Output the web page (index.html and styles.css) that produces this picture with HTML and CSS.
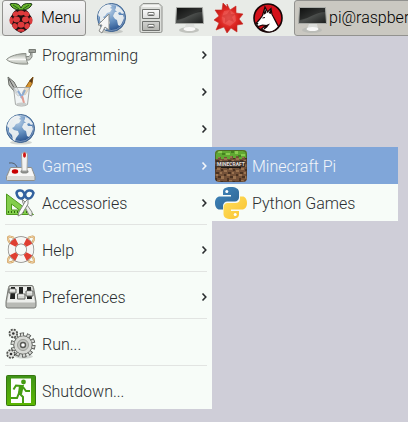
FILE: index.html
```html
<!DOCTYPE html>
<html lang="en">
<head>
<meta charset="utf-8">
<title>Desktop</title>
<link rel="stylesheet" href="styles.css">
</head>
<body>
<svg class="defs" width="0" height="0" aria-hidden="true">
  <defs>
    <radialGradient id="sea" cx=".4" cy=".25" r=".8"><stop offset="0" stop-color="#b5cce4"/><stop offset=".5" stop-color="#6590c0"/><stop offset="1" stop-color="#204a87"/></radialGradient>
    <linearGradient id="metal" x1="0" y1="0" x2="0" y2="1"><stop offset="0" stop-color="#fafafa"/><stop offset="1" stop-color="#b4b5b0"/></linearGradient>
    <linearGradient id="screen" x1="0" y1="0" x2="1" y2="1"><stop offset="0" stop-color="#181a19"/><stop offset=".5" stop-color="#4d504e"/><stop offset="1" stop-color="#1b1d1c"/></linearGradient>
    <linearGradient id="steel" x1="0" y1="0" x2="0" y2="1"><stop offset="0" stop-color="#a5aaa2"/><stop offset=".5" stop-color="#eef0ec"/><stop offset="1" stop-color="#b5bab2"/></linearGradient>
    <linearGradient id="exit" x1="0" y1="0" x2="0" y2="1"><stop offset="0" stop-color="#3f9318"/><stop offset="1" stop-color="#5cb800"/></linearGradient>
    <linearGradient id="pyblue" x1="0" y1="0" x2="1" y2="1"><stop offset="0" stop-color="#3f87bf"/><stop offset="1" stop-color="#2f6491"/></linearGradient>
    <linearGradient id="pyyellow" x1="0" y1="0" x2="1" y2="1"><stop offset="0" stop-color="#ffe15f"/><stop offset="1" stop-color="#f9c02f"/></linearGradient>
    <radialGradient id="burst"><stop offset="0" stop-color="#f26a66"/><stop offset=".6" stop-color="#dd2823"/><stop offset="1" stop-color="#c21713"/></radialGradient>
    <symbol id="globe" viewBox="0 0 32 32">
      <ellipse cx="16" cy="29.500" rx="11" ry="2" fill="#000" opacity=".15"/>
      <circle cx="15.500" cy="15.500" r="14" fill="url(#sea)" stroke="#3c6390"/>
      <path d="M3 10C5 5 9 2.500 13 2.500l3 1.500-2 2 2 1-2 3-3 1-2 3-2 1 2 2 4 1 1 3-3 4-1 3-2-1-1-5-3-3 0-4-2-2zM20 4c4 1 6 4 8 7l-2 1-2-2-2 1 1 2 4 0 1 3-2 5-2 3-2-1-1-5-2-1-2-3 2-4 2 0-2-2 1-2z" fill="#f3f5f4" opacity=".9"/>
      <circle cx="15.500" cy="15.500" r="13" fill="none" stroke="#fff" opacity=".35"/>
    </symbol>
    <symbol id="monitor" viewBox="0 0 32 32">
      <ellipse cx="15" cy="28" rx="10" ry="3" fill="#b7b9b4" opacity=".8"/>
      <path d="M12 22h8l1 5H10z" fill="#dcdedb"/>
      <ellipse cx="15.500" cy="27" rx="6" ry="2" fill="#f8f8f7"/>
      <path d="M2.500 5.500h26l1 16h-28z" fill="url(#screen)" stroke="#a9aba7"/>
      <path d="M3 6h25v4C19 10 14 16 3 18z" fill="#000" opacity=".4"/>
    </symbol>
    <symbol id="chevron" viewBox="0 0 8 10"><path d="M2.500 1.500 5.800 5 2.500 8.500" fill="none" stroke="currentColor" stroke-width="1.600"/></symbol>
  </defs>
</svg>

<header class="taskbar">
  <button class="menu-button" type="button" aria-expanded="true">
    <svg class="berry" viewBox="0 0 26 30" aria-hidden="true">
      <path d="M13 6C9 5 5 9 4 12c-3 3-3 7 0 10 1 4 5 6 9 8 4-2 8-4 9-8 3-3 3-7 0-10-1-3-5-7-9-6z" fill="#1d0e10"/>
      <path d="M13 7C9 7 4 6 2 1c3-1 5-1 7 0 2 0 3 2 4 4 1-2 2-4 4-4 2-1 4-1 7 0-2 5-7 6-11 6z" fill="#69b52c" stroke="#173312"/>
      <path d="M5 2l6 4M21 2l-6 4" stroke="#23601a"/>
      <g fill="#dd3a3c"><ellipse cx="13" cy="10" rx="3.500" ry="2.500"/><ellipse cx="7.500" cy="11" rx="3" ry="2.500" transform="rotate(-35 7.500 11)"/><ellipse cx="18.500" cy="11" rx="3" ry="2.500" transform="rotate(35 18.500 11)"/><ellipse cx="8.500" cy="16.500" rx="3.500" ry="3"/><ellipse cx="17.500" cy="16.500" rx="3.500" ry="3"/><ellipse cx="3.300" cy="17.500" rx="1.700" ry="3.500"/><ellipse cx="22.700" cy="17.500" rx="1.700" ry="3.500"/><ellipse cx="13" cy="21.800" rx="3.500" ry="3"/><ellipse cx="7" cy="23" rx="2.500" ry="3" transform="rotate(-35 7 23)"/><ellipse cx="19" cy="23" rx="2.500" ry="3" transform="rotate(35 19 23)"/><ellipse cx="13" cy="27.300" rx="3.500" ry="1.500"/></g>
    </svg>
    <span>Menu</span>
  </button>
  <nav class="launchers" aria-label="Launchers">
    <button type="button" aria-label="Web Browser">
      <svg viewBox="0 0 32 32" aria-hidden="true"><use href="#globe"/><path d="M12 11v16l-4-3-3 6-3-2 3-6H1z" transform="translate(1 1)" fill="#f6f6f5" stroke="#8b8d8a"/></svg>
    </button>
    <button type="button" aria-label="File Manager">
      <svg viewBox="0 0 32 32" aria-hidden="true">
        <path d="M8 1.500h16l3 3V29a1.500 1.500 0 0 1-1.500 1.500h-19A1.500 1.500 0 0 1 5 29V4.500z" fill="#dcdeda" stroke="#8e908c"/>
        <path d="M8 3h16l1 2H7z" fill="#f5f5f4"/>
        <path d="M7.500 7.500h17v9h-17zM7.500 19.500h17v9h-17z" fill="url(#metal)" stroke="#70726f"/>
        <path d="M13 10.500h6v3h-6zM13 22.500h6v3h-6z" fill="#fff" stroke="#777974"/>
        <path d="M14 13h4M14 25h4" stroke="#555"/>
      </svg>
    </button>
    <button type="button" aria-label="Terminal"><svg viewBox="0 0 32 32" aria-hidden="true"><use href="#monitor"/></svg></button>
    <button type="button" aria-label="Mathematica">
      <svg viewBox="0 0 32 32" aria-hidden="true">
        <path d="M14 2l3 6 6-4 0 7 7 1-4 5 4 5-6 1 0 7-6-4-4 5-3-6-8 3 3-7-5-3 5-4-4-6 7 0 1-7 4 4z" fill="url(#burst)" stroke="#c92b27" stroke-width=".6"/>
        <path d="M11 9l6-1 5 4 1 7-6 5-7-3-1-6z" fill="#ee5e59" opacity=".6"/>
        <path d="M14 12l3-4 1 4 5 0-4 3 2 5-5-2-4 3 0-5-4-2z" fill="#b81916" opacity=".3"/>
      </svg>
    </button>
    <button type="button" aria-label="Wolfram">
      <svg viewBox="0 0 32 32" aria-hidden="true">
        <circle cx="16" cy="16" r="14" fill="#d4111b" stroke="#170506" stroke-width="1.600"/>
        <path d="M13 5l2.500 5L19 6.500l1 6c2 3 3 6 6.500 12-2 3-5 5-9 5.500-3 0-6-1-8-3l4-3.500-3-.5-4.500 1.500L3.500 22l4-4.500 3-4z" fill="#fff" stroke="#170506" stroke-width="1.200"/>
        <path d="M13 6l-1.500 7 3-2zM19 7l-2.500 4 2.500 1zM3.500 21l3 0-1 2zM13 23.500l5-2-3 4-4 3z" fill="#170506"/>
        <path d="M10.500 16l2.500-.5" stroke="#170506"/>
      </svg>
    </button>
  </nav>
  <button class="task" type="button"><svg viewBox="0 0 32 32" aria-hidden="true"><use href="#monitor"/></svg><span>pi@raspberrypi: ~</span></button>
</header>

<nav class="menu" aria-label="Applications">
  <ul>
    <li><button class="item" type="button">
      <svg class="icon" viewBox="0 0 32 32" aria-hidden="true">
        <path d="M21 17.500h3l1.500-1.500v-5H29v2h-2v5l-2.500 3H21z" fill="#c3c6c0" stroke="#858984"/>
        <path d="M24 10.500h6.500v3H24z" fill="#9ea19b" stroke="#777b75"/>
        <path d="M1.500 20.500C5 17 13 14.500 21 14.500c-.5 3 .5 7 2 10.500-8 .5-17-.5-21.500-4.500z" fill="url(#steel)" stroke="#8b8f88"/>
        <path d="M4 20.500h17" stroke="#fff" opacity=".8"/>
      </svg><span>Programming</span><svg class="arrow" aria-hidden="true"><use href="#chevron"/></svg></button></li>
    <li><button class="item" type="button">
      <svg class="icon" viewBox="0 0 32 32" aria-hidden="true">
        <path d="M3 1l6 5 7 13-3 1L4 9z" fill="#b9bbb7" stroke="#686b66"/><path d="M4 3l8 14" stroke="#555"/>
        <path d="M28 1l-1 7-7 11-3-2 7-11z" fill="#d8962f" stroke="#94601a"/><path d="M28 1l-4 4 3 2z" fill="#5b3b18"/>
        <path d="M8.500 11.500h16l-2 17c-3 2-9 2-12 0z" fill="#eef2f4" fill-opacity=".75" stroke="#a6a9a7"/>
        <path d="M13 15l5 8M20 14l-4 8" stroke="#6f99d0" stroke-width="2" opacity=".75"/>
        <path d="M17 20l2 7" stroke="#e29a8e" stroke-width="2"/><ellipse cx="16.500" cy="28" rx="5" ry="1.500" fill="#c9ccca"/>
      </svg><span>Office</span><svg class="arrow" aria-hidden="true"><use href="#chevron"/></svg></button></li>
    <li><button class="item" type="button"><svg class="icon" viewBox="0 0 32 32" aria-hidden="true"><use href="#globe"/></svg><span>Internet</span><svg class="arrow" aria-hidden="true"><use href="#chevron"/></svg></button></li>
    <li class="parent"><button class="item selected" type="button" aria-expanded="true">
      <svg class="icon" viewBox="0 0 32 32" aria-hidden="true">
        <path d="M4 13q6-1 8 4" fill="none" stroke="#56606b"/>
        <path d="M5.500 17.500h21l3.500 9v3q0 1-1 1H2.500q-1 0-1-1v-3z" fill="#d9dad7" stroke="#8f908d"/>
        <path d="M6 18h20l3 8H3z" fill="#f6f6f5"/>
        <ellipse cx="10" cy="21.500" rx="3.200" ry="2.200" fill="#c80000"/><ellipse cx="19.500" cy="21.500" rx="4" ry="2" fill="#888a86"/>
        <path d="M16.500 4q3-4 6 0l-.5 17h-5z" fill="#f3f3f2" stroke="#a5a6a3"/><ellipse cx="19.500" cy="5" rx="1.500" ry="2.700" fill="#cf1717"/>
      </svg><span>Games</span><svg class="arrow" aria-hidden="true"><use href="#chevron"/></svg></button>
      <ul class="submenu">
        <li><button class="item selected" type="button">
          <svg class="icon" viewBox="0 0 32 32" aria-hidden="true">
            <defs>
              <clipPath id="block"><rect width="32" height="32" rx="4"/></clipPath>
              <pattern id="dirt" width="12" height="12" patternUnits="userSpaceOnUse"><path fill="#745138" d="M0 0h12v12H0z"/><path fill="#9a7350" d="M0 0h3v2H0zM6 2h3v3H6zM2 6h3v2H2zM9 8h3v2H9zM5 10h2v2H5z"/><path fill="#4a3221" d="M3 2h3v2H3zM9 0h2v2H9zM0 4h2v3H0zM6 7h2v2H6zM1 10h3v2H1z"/></pattern>
            </defs>
            <g clip-path="url(#block)"><path fill="url(#dirt)" d="M0 0h32v32H0z"/><path d="M0 0h32v8h-2V7h-3v2h-3V6h-3v2h-3V6h-3v3h-3V7H9v2H6V7H3v2H0z" fill="#60a832"/><path d="M3 1h4v2H3zM11 3h4v2h-4zM20 1h3v3h-3zM26 4h4v2h-4z" fill="#8acb51"/><path d="M7 3h3v2H7zM16 1h3v2h-3zM23 5h3v2h-3z" fill="#43801f"/>
            <path d="M1 11h30l-1 6H2z" fill="#302b28" opacity=".8"/><path d="M6 17h20v1H6z" fill="#1c1714"/></g>
            <text class="logo-text" x="16" y="16" text-anchor="middle">MINECRAFT</text>
            <rect x=".500" y=".500" width="31" height="31" rx="4" fill="none" stroke="#3b2b20" opacity=".5"/>
          </svg><span>Minecraft Pi</span></button></li>
        <li><button class="item" type="button">
          <svg class="icon" viewBox="0 0 32 32" aria-hidden="true">
            <path d="M15.800 0C9 0 8 2.500 8 5v3h8v1.500H5C2 9.500 0 12 0 16s2 6.500 4.500 6.500H8V19c0-2.500 2-4.500 4.500-4.500h7.500c2.200 0 4-1.800 4-4V5c0-3-3-5-8.200-5z" fill="url(#pyblue)"/>
            <path d="M16.200 32C23 32 24 29.500 24 27v-3h-8v-1.500h11c3 0 5-2.500 5-6.500s-2-6.500-4.500-6.500H25V12c0 2.500-2 4-4.500 4H12.500c-2.200 0-4 1.800-4 4v7c0 3 2.500 5 7.700 5z" fill="url(#pyyellow)"/>
            <circle cx="11.800" cy="4.500" r="1.500" fill="#fff"/><circle cx="20.200" cy="27.500" r="1.500" fill="#fff"/>
          </svg><span>Python Games</span></button></li>
      </ul>
    </li>
    <li><button class="item" type="button">
      <svg class="icon" viewBox="0 0 32 32" aria-hidden="true">
        <path d="M1.500 7v20.500h27z" fill="#83ce4c" stroke="#4f9a20"/><path d="M6.500 17v6h8z" fill="#f8fcf8" stroke="#4f9a20"/><path d="M3 25h1m2 0h1m2 0h1m2 0h1m2 0h1m2 0h1m2 0h1" stroke="#2f6b0e" stroke-width="2"/>
        <path d="M17 12l3 3 7 10v4l-3-1-6-12z" fill="#ecedeb" stroke="#878984"/><path d="M23 12l-3 3-6 10-1 4 4-2 6-10z" fill="#fafafa" stroke="#878984"/>
        <path d="M11.500 6q.5-3 4-2.500t4 4.500q-1 4-4 3.500t-4-5.500zM28.500 6q-1-3-4.500-2.500t-4 4.500q1 4 4 3.500t4.500-5.500z" fill="none" stroke="#32629f" stroke-width="2.500"/>
      </svg><span>Accessories</span><svg class="arrow" aria-hidden="true"><use href="#chevron"/></svg></button></li>
    <li class="group"><button class="item" type="button">
      <svg class="icon" viewBox="0 0 32 32" aria-hidden="true">
        <g fill="none" stroke="#c8924f" stroke-width="2"><path d="M9 4Q3 1 3 4t2 5M23 4q6-3 6 0t-2 5M9 27q-6 3-6 0t2-5M23 27q6 3 6 0t-2-5"/></g>
        <g fill="none" stroke="#f6dcae"><path d="M9 4Q3 1 3 4t2 5M23 4q6-3 6 0t-2 5M9 27q-6 3-6 0t2-5M23 27q6 3 6 0t-2-5"/></g>
        <circle cx="16" cy="15.500" r="9.200" fill="none" stroke="#85827e" stroke-width="8"/>
        <circle cx="16" cy="15.500" r="9.200" fill="none" stroke="#f6f6f4" stroke-width="6.600"/>
        <circle cx="16" cy="15.500" r="9.200" fill="none" stroke="#df3f32" stroke-width="6.600" pathLength="80" stroke-dasharray="8 12" stroke-dashoffset="-6"/>
      </svg><span>Help</span><svg class="arrow" aria-hidden="true"><use href="#chevron"/></svg></button></li>
    <li class="group"><button class="item" type="button">
      <svg class="icon" viewBox="0 0 32 32" aria-hidden="true">
        <path d="M5 4.500h22q1 0 1.500 2l2.500 14V25q0 2-2 2H3q-2 0-2-2v-4.500l2.500-14q.5-2 1.500-2z" fill="#b8bab5" stroke="#777974"/>
        <path d="M5 5.500h22l3 16H2z" fill="#eceeeb"/>
        <path d="M6 6h4v12H5zM14 6h4v12h-4zM22 6h4l1 12h-5z" fill="#222423"/>
        <path d="M4 8h7v4H4zM12.500 13h7.500v5h-7.500zM21 10h7v5h-7z" fill="#d6d8d4" stroke="#666864"/>
        <path d="M5 9h5M13.500 14h5.500M22 11h5" stroke="#fff"/>
      </svg><span>Preferences</span><svg class="arrow" aria-hidden="true"><use href="#chevron"/></svg></button></li>
    <li class="group"><button class="item" type="button">
      <svg class="icon" viewBox="0 0 32 32" aria-hidden="true">
        <ellipse cx="19" cy="28.500" rx="9" ry="2" fill="#000" opacity=".15"/>
        <circle cx="18" cy="17" r="10.500" fill="none" stroke="#4c4e4b" stroke-width="4" stroke-dasharray="4 2.597"/>
        <circle cx="18" cy="17" r="9.300" fill="#d7d9d5" stroke="#5c5e5a"/>
        <circle cx="18" cy="17" r="10.500" fill="none" stroke="#d7d9d5" stroke-width="2.400" stroke-dasharray="2.400 4.197" stroke-dashoffset="-.8"/>
        <circle cx="18" cy="17" r="5.500" fill="#c3c5c1" stroke="#9b9d98"/><circle cx="18" cy="17" r="2.500" fill="#fff" stroke="#555753" stroke-width="1.400"/>
        <g fill="#e3e5e1" stroke="#50524e"><circle cx="8.300" cy="5.500" r="3.900" stroke-width="1.700" stroke-dasharray="2 1.063"/><circle cx="6" cy="26" r="3.900" stroke-width="1.700" stroke-dasharray="2 1.063"/></g>
        <circle cx="8.300" cy="5.500" r="1.300" fill="#333"/><circle cx="6" cy="26" r="1.300" fill="#333"/>
      </svg><span>Run...</span></button></li>
    <li class="group"><button class="item" type="button">
      <svg class="icon" viewBox="0 0 32 32" aria-hidden="true">
        <rect x="1.500" y=".500" width="29" height="30" rx="1" fill="url(#exit)" stroke="#35760f"/>
        <path d="M6 3.500h20V28H6z" fill="#fdfefd"/>
        <circle cx="18.500" cy="7" r="2.400" fill="#459c12"/>
        <path d="M17 11l-3 7 4 4v6M14 18l-2 5H6M17 11l-6-.5-2.500 4M18 12l3 4 4 0" fill="none" stroke="#459c12" stroke-width="2"/><path d="M14 10h5l-2 9h-4z" fill="#459c12"/>
      </svg><span>Shutdown...</span></button></li>
  </ul>
</nav>
</body>
</html>
```

FILE: styles.css
```css
* {
  box-sizing: border-box;
}

body {
  margin: 0;
  min-height: 100vh;
  overflow: hidden;
  background: #cfced8;
  color: #2b2e30;
  font: 300 16px/20px Roboto, "Liberation Sans", sans-serif;
}

.defs {
  position: absolute;
}

button {
  margin: 0;
  border: 0;
  background: none;
  color: inherit;
  font: inherit;
  text-align: left;
}

ul {
  margin: 0;
  padding: 0;
  list-style: none;
}

.taskbar {
  display: flex;
  height: 36px;
  padding-left: 2px;
  overflow: hidden;
  background: #e8ebe7;
}

.menu-button,
.task {
  display: flex;
  flex: none;
  align-items: center;
  border: 1px solid #92928f;
  border-radius: 3px;
  color: #000;
  white-space: nowrap;
}

.menu-button {
  width: 84px;
  gap: 7px;
  padding: 0 5px;
  background: linear-gradient(#f4f4f4, #dededd);
}

.berry {
  flex: none;
  width: 26px;
  height: 30px;
}

.launchers {
  display: flex;
  flex: none;
  gap: 7px;
  padding: 0 10px;
}

.launchers button {
  display: flex;
  align-items: center;
  width: 32px;
  padding: 0;
}

.launchers svg,
.task svg,
.icon {
  flex: none;
  width: 32px;
  height: 32px;
}

.task {
  width: 200px;
  padding: 0 2px;
  background: #cac8c1;
}

.menu {
  width: 212px;
  background: #f7fcf8;
}

.item {
  display: flex;
  align-items: center;
  gap: 5px;
  width: 100%;
  height: 37px;
  padding: 0 4px 0 5px;
}

.item span {
  flex: 1;
  padding-top: 2px;
}

.selected {
  background: #80a6d9;
  color: #f3f6fa;
}

.arrow {
  width: 8px;
  height: 10px;
}

.group::before {
  content: "";
  display: block;
  height: 1px;
  margin: 3px 5px 6px;
  background: #e2e4e2;
}

.parent {
  position: relative;
}

.submenu {
  position: absolute;
  top: 0;
  left: 100%;
  width: 186px;
  background: #f7fcf8;
}

.submenu .item {
  padding-left: 3px;
}

.logo-text {
  fill: #e1dfdc;
  font: 700 5px Roboto, sans-serif;
}
```
